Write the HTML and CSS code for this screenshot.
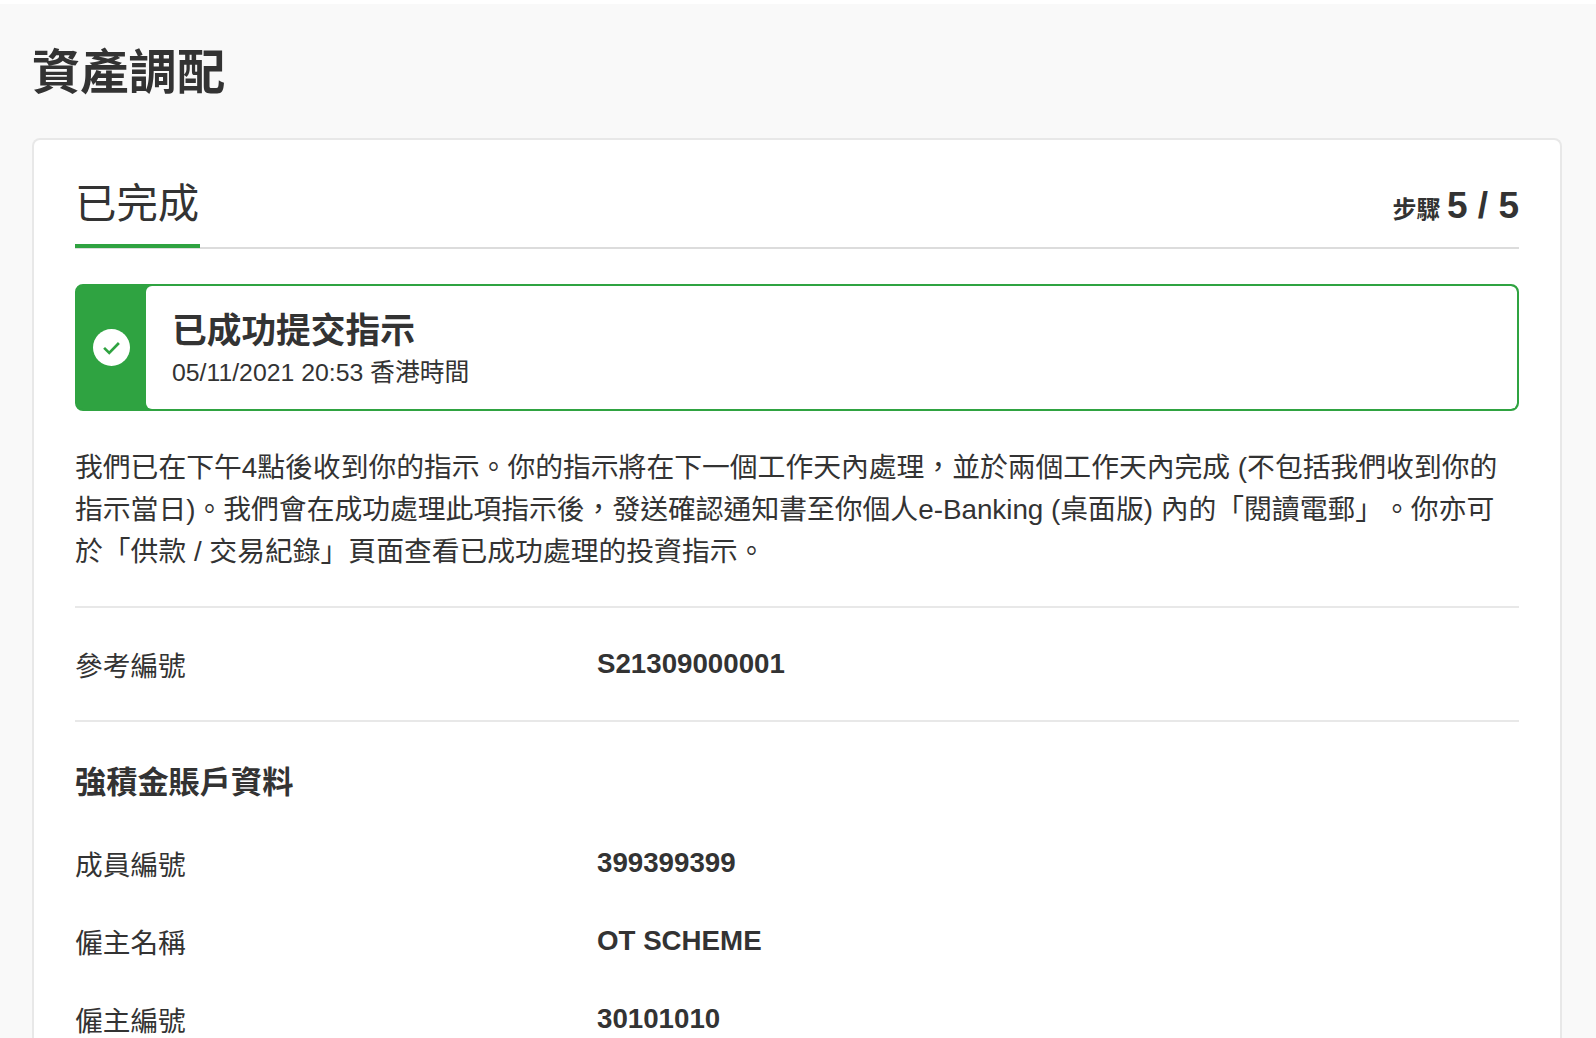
FILE: index.html
```html
<!DOCTYPE html>
<html lang="zh-Hant">
<head>
<meta charset="utf-8">
<title>資產調配</title>
<link rel="stylesheet" href="styles.css">
</head>
<body>
<main class="page">
  <h1 class="page-title">資產調配</h1>
  <section class="card">
    <header class="tab-head">
      <h2 class="tab-title">已完成</h2>
      <div class="step"><span class="step-label">步驟</span> <span class="step-num">5 / 5</span></div>
    </header>
    <div class="alert">
      <div class="alert-side">
        <svg class="alert-icon" viewBox="0 0 36 36" width="37" height="37"><circle cx="18" cy="18" r="18" fill="#fff"/><path d="M10.8 18.4l5 4.8 9.4-9.6" fill="none" stroke="#2fa341" stroke-width="2.6"/></svg>
      </div>
      <div class="alert-body">
        <div class="alert-title">已成功提交指示</div>
        <div class="alert-time">05/11/2021 20:53 香港時間</div>
      </div>
    </div>
    <p class="notice">我們已在下午4點後收到你的指示。你的指示將在下一個工作天內處理，並於兩個工作天內完成 (不包括我們收到你的指示當日)。我們會在成功處理此項指示後，發送確認通知書至你個人e-Banking (桌面版) 內的「閱讀電郵」。你亦可於「供款 / 交易紀錄」頁面查看已成功處理的投資指示。</p>
    <div class="row row-ref"><span class="label">參考編號</span><span class="value">S21309000001</span></div>
    <div class="section">
      <h3 class="section-title">強積金賬戶資料</h3>
      <div class="row"><span class="label">成員編號</span><span class="value">399399399</span></div>
      <div class="row"><span class="label">僱主名稱</span><span class="value">OT SCHEME</span></div>
      <div class="row"><span class="label">僱主編號</span><span class="value">30101010</span></div>
    </div>
  </section>
</main>
</body>
</html>
```
FILE: styles.css
```css
* { box-sizing: border-box; }
html, body { margin: 0; height: 100%; overflow: hidden; }
body {
  background: #f9f9f9;
  color: #333;
  font-family: "Liberation Sans", "Noto Sans CJK TC", sans-serif;
  border-top: 4px solid #fff;
  text-spacing-trim: space-all;
}
.page { padding: 36px 34px 0 32px; }
.page-title { margin: 0; font-size: 48.3px; line-height: 64px; font-weight: 700; }
.card {
  margin-top: 34px;
  background: #fff;
  border: 2px solid #e8e8e8;
  border-bottom: 0;
  border-radius: 8px 8px 0 0;
  padding: 32px 41px 0;
}
.tab-head {
  display: flex;
  justify-content: space-between;
  align-items: center;
  height: 77px;
  border-bottom: 2px solid #dcdcdc;
}
.tab-title {
  margin: 0;
  height: 77px;
  padding: 3px 1px 0 0;
  font-size: 41.4px;
  line-height: 60px;
  font-weight: 400;
  border-bottom: 4px solid #2fa341;
}
.step { font-weight: 700; padding-bottom: 8px; }
.step-label { font-size: 24px; margin-right: 2px; }
.step-num { font-size: 37px; }
.alert {
  display: flex;
  height: 127px;
  margin-top: 35px;
  background: #2fa341;
  border: 2px solid #2fa341;
  border-radius: 8px;
  overflow: hidden;
}
.alert-side {
  flex: 0 0 69px;
  padding-right: 1px;
  display: flex;
  align-items: center;
  justify-content: center;
}
.alert-body {
  flex: 1;
  background: #fff;
  border-radius: 6px;
  padding: 24px 26px 0;
}
.alert-title { font-size: 34.7px; line-height: 42px; font-weight: 700; }
.alert-time { font-size: 24.8px; line-height: 42px; }
.notice {
  margin: 36px 0 0;
  font-size: 27.8px;
  line-height: 42px;
  padding-bottom: 33px;
  border-bottom: 2px solid #e8e8e8;
}
.row { display: flex; align-items: center; height: 78px; font-size: 27.7px; }
.row-ref { height: 114px; border-bottom: 2px solid #e8e8e8; }
.label { flex: 0 0 522px; }
.value { font-weight: 700; }
.section-title { margin: 39px 0 19px; font-size: 31.2px; line-height: 44px; font-weight: 700; }
```
